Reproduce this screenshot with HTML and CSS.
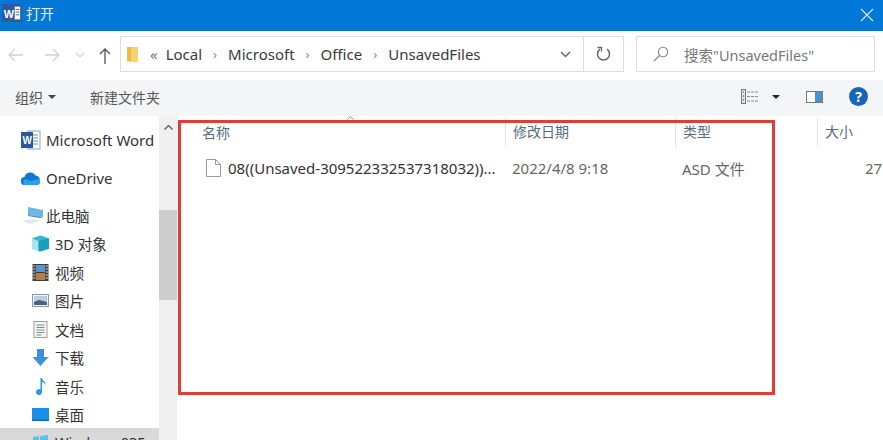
FILE: index.html
```html
<!DOCTYPE html>
<html lang="zh-CN">
<head>
  <meta charset="UTF-8">
  <title>打开</title>
  <link rel="stylesheet" href="styles.css">
</head>
<body>
  <div class="dialog">
    <div class="titlebar">
      <svg class="word-small" width="20" height="20" viewBox="0 0 22 22"><rect x="0" y="1" width="22" height="20" rx="2" fill="#2b5a9e"/><text x="2" y="16" font-size="12" font-weight="700" fill="#fff" font-family="Liberation Sans">W</text><rect x="14" y="4" width="6" height="14" fill="#fff"/><path d="M15 7h4M15 10h4M15 13h4" stroke="#2b5a9e"/></svg>
      <span class="title">打开</span>
      <svg class="close" width="14" height="14" viewBox="0 0 14 14"><path d="M1 1l12 12M13 1L1 13" stroke="#dcecf9" stroke-width="1.1"/></svg>
    </div>

    <div class="navbar">
      <svg class="nav-icon" width="16" height="14" viewBox="0 0 16 14"><path d="M15 7H1M7 1L1 7l6 6" fill="none" stroke="#d0d0d0" stroke-width="1.3"/></svg>
      <svg class="nav-icon fwd" width="16" height="14" viewBox="0 0 16 14"><path d="M1 7h14M9 1l6 6-6 6" fill="none" stroke="#d0d0d0" stroke-width="1.3"/></svg>
      <svg class="nav-icon down" width="10" height="6" viewBox="0 0 10 6"><path d="M1 1l4 4 4-4" fill="none" stroke="#d0d0d0" stroke-width="1.2"/></svg>
      <svg class="nav-icon up" width="12" height="16" viewBox="0 0 12 16"><path d="M6 16V1M1 6l5-5 5 5" fill="none" stroke="#555" stroke-width="1.3"/></svg>
      <div class="address">
        <svg class="folder" width="11" height="16" viewBox="0 0 11 16"><path d="M0 1h11v15H3l-3-1z" fill="#f3d374"/><path d="M0 1h4v14H0z" fill="#e8bc45"/></svg>
        <span class="crumb-more">«</span>
        <span>Local</span><span class="sep">›</span>
        <span>Microsoft</span><span class="sep">›</span>
        <span>Office</span><span class="sep">›</span>
        <span>UnsavedFiles</span>
        <svg class="addr-drop" width="11" height="7" viewBox="0 0 11 7"><path d="M1 1l4.500 4.500L10 1" fill="none" stroke="#666" stroke-width="1.5"/></svg>
        <div class="refresh">
          <svg width="15" height="16" viewBox="0 0 15 16"><path d="M4 3.200a6 6 0 1 0 7 0" fill="none" stroke="#666" stroke-width="1.500"/><path d="M1.500 1.500h4v4" fill="none" stroke="#666" stroke-width="1.300"/></svg>
        </div>
      </div>
      <div class="search">
        <svg width="16" height="16" viewBox="0 0 16 16"><circle cx="10" cy="6" r="4.700" fill="none" stroke="#888" stroke-width="1.100"/><path d="M6.500 9.500L1 15" stroke="#888" stroke-width="1.200"/></svg>
        <span>搜索"UnsavedFiles"</span>
      </div>
    </div>

    <div class="toolbar">
      <span class="tool">组织</span><span class="tri"></span>
      <span class="tool newfolder">新建文件夹</span>
      <div class="tool-right">
        <svg width="18" height="15" viewBox="0 0 18 15"><rect x="0.500" y="0.500" width="4" height="14" fill="#e4e4e4" stroke="#777"/><path d="M2 3h1M2 7h1M2 11h1" stroke="#334"/><path d="M6 3h12M6 7.500h12M6 12h12" stroke="#888" stroke-dasharray="3 1"/></svg>
        <span class="tri dark"></span>
        <svg class="pane" width="17" height="12" viewBox="0 0 17 12"><rect x="0.500" y="0.500" width="16" height="11" fill="#fff" stroke="#777"/><rect x="9" y="1" width="7" height="10" fill="#4a90d0"/></svg>
        <span class="help">?</span>
      </div>
    </div>

    <div class="body">
      <aside class="sidebar">
        <div class="item top word">
          <svg width="20" height="20" viewBox="0 0 20 20"><rect x="7" y="1" width="12" height="18" fill="#fff" stroke="#8aa2c4"/><path d="M12 5h5M12 8h5M12 11h5M12 14h5" stroke="#6f8fbd"/><rect x="0" y="2" width="12" height="16" fill="#2b579a"/><text x="1.500" y="14" font-size="10" font-weight="700" fill="#fff" font-family="Liberation Sans">W</text></svg>
          <span>Microsoft Word</span>
        </div>
        <div class="item top drive">
          <svg width="20" height="13" viewBox="0 0 20 13"><path d="M4 13a4 4 0 0 1-.500-8 6 6 0 0 1 11-1.500A5 5 0 0 1 16 13z" fill="#0f78d4"/><path d="M4 13a3.500 3.500 0 0 1 0-6l6 2 8-2a3.500 3.500 0 0 1-1 6z" fill="#2c9fe6"/></svg>
          <span>OneDrive</span>
        </div>
        <div class="item pc">
          <svg width="22" height="18" viewBox="0 0 22 18"><path d="M6 1l15 3v7L6 9z" fill="#6fb7e8"/><path d="M6 9l15 2-3 1-12-2z" fill="#3f88c5"/><path d="M0 15l12-2 6 2-10 3z" fill="#dfe6ee"/></svg>
          <span>此电脑</span>
        </div>
        <div class="item sub">
          <svg width="18" height="17" viewBox="0 0 18 17"><path d="M0 3l9-3 9 3v11l-9 3-9-3z" fill="#35b5cf"/><path d="M0 3l7 3v11l-7-3z" fill="#a9e5ee"/><path d="M7 6l11-3v11l-11 3z" fill="#1b9dbd"/></svg>
          <span>3D 对象</span>
        </div>
        <div class="item sub">
          <svg width="16" height="17" viewBox="0 0 16 17"><rect width="16" height="17" fill="#3c3f46"/><path d="M0 2h3M0 5h3M0 8h3M0 11h3M0 14h3M13 2h3M13 5h3M13 8h3M13 11h3M13 14h3" stroke="#ccc"/><rect x="3.500" y="1" width="9" height="7" fill="#5a94c8"/><rect x="3.500" y="9" width="9" height="7" fill="#c07a3e"/></svg>
          <span>视频</span>
        </div>
        <div class="item sub">
          <svg width="17" height="13" viewBox="0 0 17 13"><rect x="0.500" y="0.500" width="16" height="12" fill="#eef2f6" stroke="#8d99a6"/><rect x="2" y="2" width="13" height="9" fill="#b8cfe2"/><path d="M2 8l5-2 8 2v3H2z" fill="#46627c"/></svg>
          <span>图片</span>
        </div>
        <div class="item sub">
          <svg width="14" height="17" viewBox="0 0 14 17"><rect x="0.500" y="0.500" width="13" height="16" fill="#f5f5ef" stroke="#9aa39e"/><path d="M3 4h8M3 6.500h8M3 9h8M3 11.500h8M3 14h5" stroke="#6f8f9f"/></svg>
          <span>文档</span>
        </div>
        <div class="item sub">
          <svg width="16" height="17" viewBox="0 0 16 17"><path d="M4.500 0h7v8H16l-8 9-8-9h4.500z" fill="#3c8fe0"/></svg>
          <span>下载</span>
        </div>
        <div class="item sub">
          <svg width="14" height="17" viewBox="0 0 14 17"><path d="M7 0h1.500c.3 3 4 3.500 3.500 7-.8-2-2.500-2.700-3.500-3v10a3 3 0 1 1-1.500-2.500z" fill="#2d96e4"/></svg>
          <span>音乐</span>
        </div>
        <div class="item sub">
          <svg width="17" height="13" viewBox="0 0 17 13"><rect width="17" height="13" fill="#1b8fe6"/><rect y="11.500" width="17" height="1.500" fill="#0f6fba"/></svg>
          <span>桌面</span>
        </div>
        <div class="item sub selected">
          <svg width="15" height="15" viewBox="0 0 15 15"><path d="M0 2l6-1v6H0zM7 1l8-1v7H7zM0 8h6v6l-6-1zM7 8h8v7l-8-1z" fill="#5cc2ea"/></svg>
          <span>Windows 035</span>
        </div>
      </aside>

      <div class="scrollbar">
        <svg class="scroll-up" width="9" height="5" viewBox="0 0 9 5"><path d="M.5 4.500l4-4 4 4" fill="none" stroke="#555" stroke-width="1.200"/></svg>
        <div class="thumb"></div>
      </div>

      <main class="files">
        <div class="file-head">
          <div class="col name">名称</div>
          <div class="col date">修改日期</div>
          <div class="col type">类型</div>
          <div class="col size">大小</div>
        </div>
        <div class="file-row">
          <div class="col name">
            <svg width="15" height="18" viewBox="0 0 15 18"><path d="M.5.5h9l5 5v12H.500z" fill="#fff" stroke="#9a9a9a"/><path d="M9.500.5v5h5" fill="none" stroke="#9a9a9a"/></svg>
            <span class="fname">08((Unsaved-309522332537318032))...</span>
          </div>
          <div class="col date">2022/4/8 9:18</div>
          <div class="col type">ASD 文件</div>
          <div class="col size right">27</div>
        </div>
      </main>

      <svg class="sort-caret" width="7" height="4" viewBox="0 0 7 4"><path d="M.5 3.500l3-3 3 3" fill="none" stroke="#8a8a8a"/></svg>
      <div class="red-box"></div>
    </div>
  </div>
</body>
</html>
```

FILE: styles.css
```css
* {
  box-sizing: border-box;
}

html, body {
  margin: 0;
  height: 100%;
}

body {
  font-family: "Noto Sans", "Noto Sans CJK SC", sans-serif;
  font-size: 14px;
  color: #333;
  background-color: #fff;
  overflow: hidden;
}

.dialog {
  width: 883px;
  height: 440px;
  display: flex;
  flex-direction: column;
  overflow: hidden;
}

.titlebar {
  height: 31px;
  flex: none;
  display: flex;
  align-items: center;
  padding: 0 9px 5px 0;
  background-color: #0078d7;
  color: #e6f2fb;
}

.word-small {
  margin-left: 2px;
  margin-right: 4px;
}

.title {
  font-size: 14px;
}

.close {
  margin-left: auto;
  margin-top: 3px;
}

.navbar {
  height: 49px;
  flex: none;
  display: flex;
  align-items: center;
  padding: 0 8px 0 0;
}

.nav-icon {
  flex: none;
  margin-left: 8px;
  margin-top: -1px;
}

.nav-icon.fwd {
  margin-left: 20px;
}

.nav-icon.down {
  margin-left: 15px;
}

.nav-icon.up {
  margin-left: 14px;
  margin-top: 1px;
}

.address {
  height: 36px;
  width: 504px;
  margin-left: 9px;
  margin-top: -3px;
  flex: none;
  display: flex;
  align-items: center;
  gap: 10px;
  padding-left: 6px;
  border: 1px solid #dedede;
  font-size: 15px;
  color: #3a3a3a;
}

.folder {
  flex: none;
}

.crumb-more {
  color: #777;
  margin-left: 2px;
  margin-right: -2px;
}

.sep {
  margin: 0 1px;
  color: #888;
  font-size: 13px;
}

.addr-drop {
  margin-left: auto;
  margin-right: 12px;
}

.refresh {
  width: 40px;
  height: 100%;
  flex: none;
  margin-left: -10px;
  display: flex;
  align-items: center;
  justify-content: center;
  border-left: 1px solid #dedede;
}

.search {
  height: 36px;
  width: 239px;
  margin-left: 12px;
  margin-top: -3px;
  flex: none;
  display: flex;
  align-items: center;
  gap: 15px;
  padding-left: 16px;
  border: 1px solid #dedede;
  font-size: 14.500px;
  color: #777;
}

.toolbar {
  height: 36px;
  flex: none;
  display: flex;
  align-items: center;
  padding: 0 15px 3px;
  background-color: #f4f5f7;
  font-size: 14px;
  color: #555;
}

.tri {
  width: 0;
  height: 0;
  margin-left: 5px;
  border-left: 4px solid transparent;
  border-right: 4px solid transparent;
  border-top: 4px solid #444;
}

.tri.dark {
  border-top-color: #223;
  margin-left: 0;
}

.newfolder {
  margin-left: 34px;
}

.tool-right {
  margin-left: auto;
  display: flex;
  align-items: center;
  gap: 13px;
}

.pane {
  margin-left: 13px;
}

.help {
  width: 19px;
  height: 19px;
  margin-left: 13px;
  border-radius: 50%;
  background-color: #1565b8;
  color: #fff;
  font-weight: 700;
  font-size: 14px;
  line-height: 19px;
  text-align: center;
}

.body {
  flex: 1;
  min-height: 0;
  display: flex;
  position: relative;
}

.sidebar {
  width: 159px;
  flex: none;
  overflow: hidden;
  padding-top: 10px;
  color: #333;
}

.item {
  height: 28.500px;
  display: flex;
  align-items: center;
  gap: 5px;
  font-size: 14.500px;
  white-space: nowrap;
}

.item.top {
  height: 28px;
  padding-left: 21px;
  font-size: 15px;
}

.item.word {
  margin-bottom: 10px;
}

.item.drive {
  margin-bottom: 9px;
}

.item.pc {
  padding-left: 22px;
  gap: 2px;
}

.item.sub {
  padding-left: 32px;
  gap: 6px;
}

.item.sub svg {
  flex: none;
  width: 17px;
}

.item.selected {
  margin-top: -1px;
  background-color: #d9d9d9;
}

.scrollbar {
  width: 18px;
  flex: none;
  background-color: #f0f0f0;
  display: flex;
  flex-direction: column;
  align-items: center;
  padding-top: 9px;
}

.thumb {
  width: 100%;
  height: 90px;
  margin-top: 80px;
  background-color: #cdcdcd;
}

.files {
  flex: 1;
  min-width: 0;
  color: #666;
  font-size: 15px;
}

.file-head,
.file-row {
  display: flex;
}

.file-head {
  height: 31px;
  align-items: center;
  font-size: 14px;
  color: #5a6b7e;
}

.file-row {
  height: 34px;
  align-items: center;
  margin-top: 4px;
}

.col.name {
  width: 328px;
  flex: none;
  padding-left: 25px;
  display: flex;
  align-items: center;
  gap: 7px;
}

.file-row .col.name {
  padding-left: 29px;
}

.col.date {
  width: 170px;
  flex: none;
  padding-left: 7px;
}

.col.type {
  width: 142px;
  flex: none;
  padding-left: 7px;
}

.col.size {
  padding-left: 7px;
}

.col.size.right {
  padding-left: 48px;
}

.file-head .col + .col {
  height: 30px;
  line-height: 30px;
  border-left: 1px solid #e5e5e5;
}

.fname {
  color: #333;
  white-space: nowrap;
}

.sort-caret {
  position: absolute;
  left: 347px;
  top: 0;
}

.red-box {
  position: absolute;
  left: 178px;
  top: 4px;
  width: 597px;
  height: 275px;
  border: 3px solid #e03c38;
}
```
